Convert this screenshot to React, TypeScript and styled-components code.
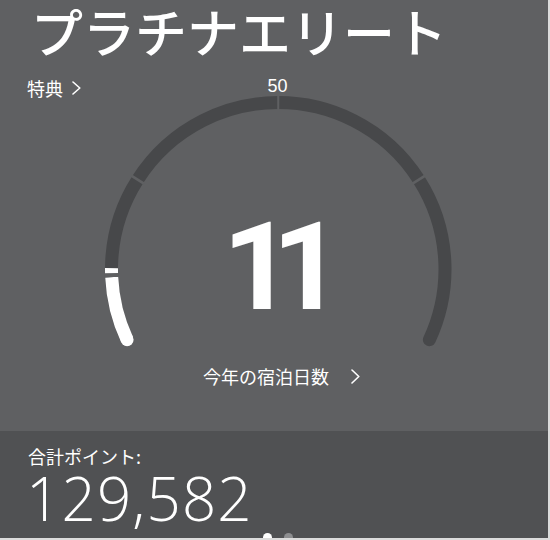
import React from 'react';
import styled, { createGlobalStyle } from 'styled-components';

const Global = createGlobalStyle`
  html, body { margin: 0; padding: 0; background: #dcdcdc; }
  body { font-family: "Noto Sans CJK JP", "Noto Sans", sans-serif; }
`;

const Screen = styled.div`
  width: 548px;
  height: 538px;
  overflow: hidden;
  display: flex;
  flex-direction: column;
`;

const StatusPanel = styled.section`
  height: 431px;
  flex: none;
  background: #5f6062;
  color: #fff;
  display: flex;
  flex-direction: column;
`;

const TierTitle = styled.h1`
  margin: 0;
  padding-left: 31px;
  font-size: 52px;
  font-weight: 500;
  line-height: 62px;
  letter-spacing: 0;
  white-space: nowrap;
`;

const LinkRow = styled.a<{ gap: number }>`
  display: flex;
  align-items: center;
  gap: ${(p) => p.gap}px;
  color: #fff;
  text-decoration: none;
  font-size: 18px;
  line-height: 18px;
  white-space: nowrap;
`;

const BenefitsLink = styled(LinkRow)`
  margin: 17px 0 0 27px;
  align-self: flex-start;
`;

const Gauge = styled.div`
  width: 360px;
  margin: -20px 0 0 98px;
  display: flex;
  flex-direction: column;
  align-items: center;
`;

const ScaleLabel = styled.div`
  font-family: "Liberation Sans", Arial, sans-serif;
  font-size: 18px;
  line-height: 18px;
  height: 19px;
  padding-right: 1px;
`;

const Dial = styled.div`
  position: relative;
  width: 360px;
  height: 260px;
  svg { display: block; }
`;

const Reading = styled.div`
  position: absolute;
  left: 0;
  right: 0;
  top: 110px;
  display: flex;
  justify-content: center;
  font-family: Roboto, "Liberation Sans", sans-serif;
  font-weight: 700;
  font-size: 123px;
  line-height: 123px;
`;

const ReadingText = styled.span`
  letter-spacing: -21px;
  margin-left: -12px;
`;

const NightsLink = styled(LinkRow)`
  margin: 11px 0 0 203px;
  align-self: flex-start;
`;

const PointsPanel = styled.section`
  flex: 1;
  background: #505153;
  color: #fff;
  padding-left: 28px;
  display: flex;
  flex-direction: column;
`;

const PointsLabel = styled.div`
  font-size: 18px;
  line-height: 20px;
  margin-top: 15px;
  white-space: nowrap;
`;

const PointsValue = styled.div`
  font-family: "Open Sans", Roboto, sans-serif;
  font-weight: 300;
  font-size: 60px;
  line-height: 56px;
  margin-top: 4px;
  margin-left: -2px;
  letter-spacing: 1.2px;
`;

const Pager = styled.div`
  display: flex;
  gap: 12px;
  margin: 7px 0 0 235px;
`;

const Dot = styled.span<{ active?: boolean }>`
  width: 9px;
  height: 9px;
  border-radius: 50%;
  background: ${(p) => (p.active ? '#ffffff' : '#8d8e90')};
`;

const Chevron = ({ w, h }: { w: number; h: number }) => (
  <svg width={w} height={h} viewBox={`0 0 ${w} ${h}`} fill="none">
    <path
      d={`M1 1 L${w - 1.2} ${h / 2} L1 ${h - 1}`}
      stroke="#fff"
      strokeWidth="1.6"
      strokeLinecap="round"
      strokeLinejoin="round"
    />
  </svg>
);

const CX = 180.25;
const CY = 173.25;
const R = 166.75;
const SW = 13;
const START = -115;
const END = 115;
const toAngle = (v: number) => START + ((END - START) * v) / 100;

const pt = (a: number) => {
  const rad = (a * Math.PI) / 180;
  return [CX + R * Math.sin(rad), CY - R * Math.cos(rad)];
};

const arc = (a1: number, a2: number) => {
  const [x1, y1] = pt(a1);
  const [x2, y2] = pt(a2);
  const large = a2 - a1 > 180 ? 1 : 0;
  return `M${x1.toFixed(2)} ${y1.toFixed(2)} A${R} ${R} 0 ${large} 1 ${x2.toFixed(2)} ${y2.toFixed(2)}`;
};

const GaugeDrawing = ({ value }: { value: number }) => {
  const v = toAngle(value);
  const [sx, sy] = pt(START);
  const bg = '#5f6062';
  return (
    <svg width="360" height="260" viewBox="0 0 360 260">
      <path d={arc(START, END)} stroke="#47484a" strokeWidth={SW} fill="none" strokeLinecap="round" />
      {[-57.5, 0, 57.5].map((a) => (
        <path
          key={a}
          d={arc(a - (a === 0 ? 0.35 : 0.45), a + (a === 0 ? 0.35 : 0.45))}
          stroke={bg}
          strokeWidth={SW + 2}
          fill="none"
        />
      ))}
      <path d={arc(START, v - 3)} stroke="#fff" strokeWidth={SW} fill="none" />
      <circle cx={sx} cy={sy} r={SW / 2} fill="#fff" />
      <path d={arc(v - 3, v - 1.6)} stroke={bg} strokeWidth={SW + 1} fill="none" />
      <path d={arc(v - 1.6, v + 0.1)} stroke="#fff" strokeWidth={SW} fill="none" />
    </svg>
  );
};

export default function App() {
  return (
    <>
      <Global />
      <Screen>
        <StatusPanel>
          <TierTitle>プラチナエリート</TierTitle>
          <BenefitsLink href="#" gap={9}>
            特典
            <Chevron w={9} h={14} />
          </BenefitsLink>
          <Gauge>
            <ScaleLabel>50</ScaleLabel>
            <Dial>
              <GaugeDrawing value={11} />
              <Reading>
                <ReadingText>11</ReadingText>
              </Reading>
            </Dial>
          </Gauge>
          <NightsLink href="#" gap={22}>
            今年の宿泊日数
            <Chevron w={9} h={15} />
          </NightsLink>
        </StatusPanel>
        <PointsPanel>
          <PointsLabel>合計ポイント:</PointsLabel>
          <PointsValue>129,582</PointsValue>
          <Pager>
            <Dot active />
            <Dot />
          </Pager>
        </PointsPanel>
      </Screen>
    </>
  );
}
